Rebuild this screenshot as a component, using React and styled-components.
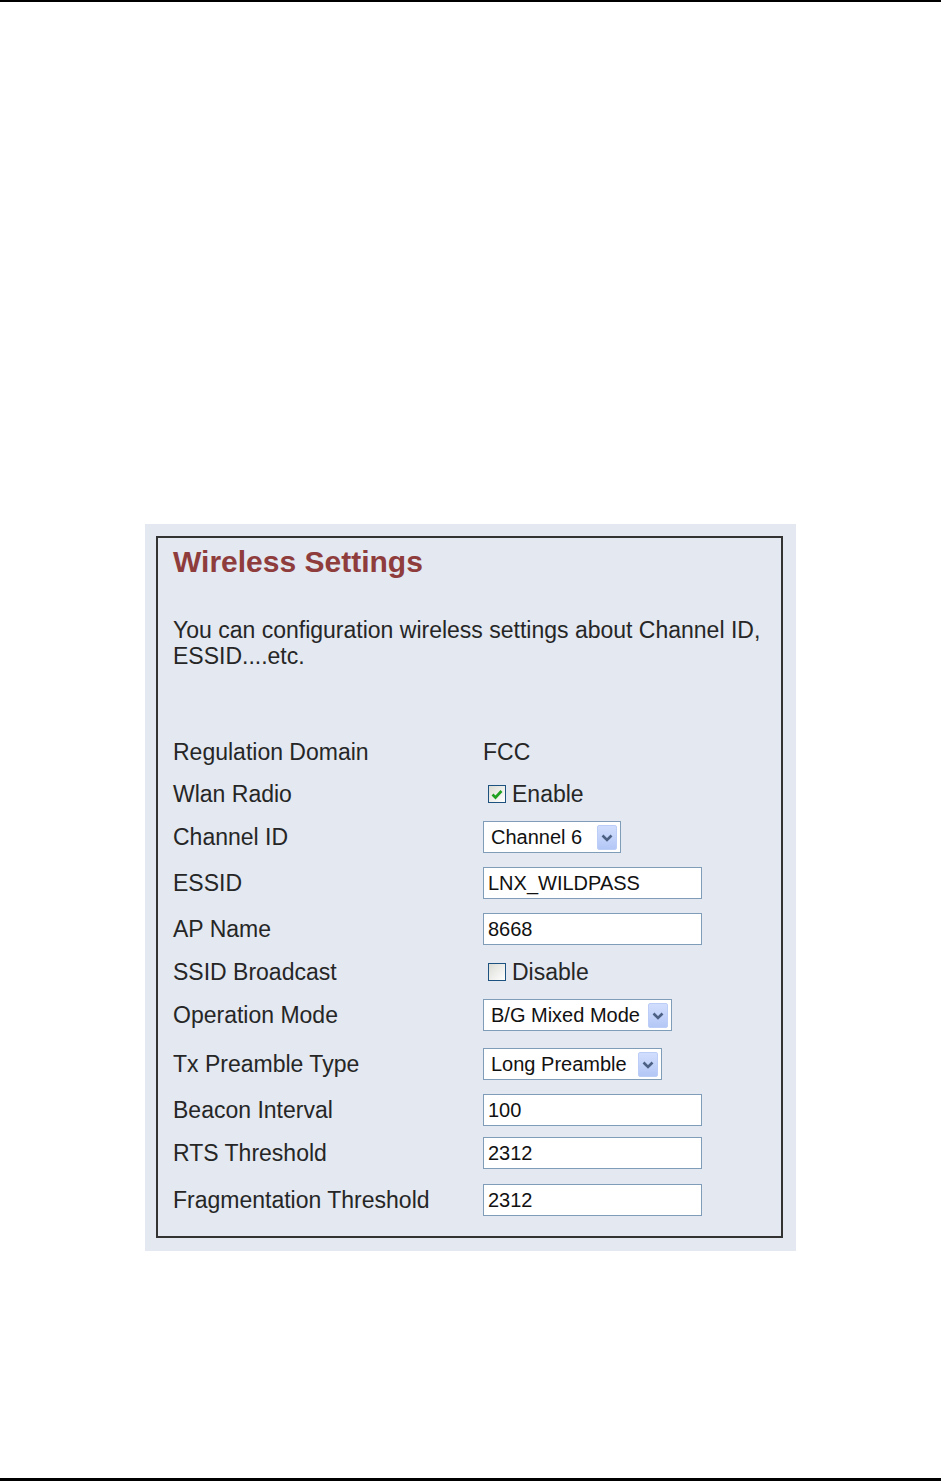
import React from "react";
import styled, { createGlobalStyle } from "styled-components";

const Global = createGlobalStyle`
  html, body { margin: 0; padding: 0; background: #ffffff; }
  body { font-family: "Liberation Sans", Arial, sans-serif; }
`;

const Page = styled.div`
  width: 941px;
  height: 1481px;
  display: flex;
  flex-direction: column;
  box-sizing: border-box;
  border-top: 2px solid #000;
  border-bottom: 3px solid #000;
`;

const Panel = styled.section`
  margin: 522px 0 0 145px;
  width: 651px;
  height: 727px;
  box-sizing: border-box;
  background: #e3e8f1;
  padding: 12px 13px 13px 11px;
`;

const Frame = styled.div`
  height: 100%;
  box-sizing: border-box;
  border: 2px solid #333333;
  padding: 7px 10px 0 15px;
  display: flex;
  flex-direction: column;
`;

const Title = styled.h1`
  margin: 0;
  font-size: 30px;
  line-height: 34px;
  font-weight: bold;
  color: #8f3c3c;
`;

const Intro = styled.p`
  margin: 38px 0 0 0;
  font-size: 23px;
  line-height: 26px;
  color: #262626;
`;

const Rows = styled.div`
  margin-top: 62px;
  display: flex;
  flex-direction: column;
`;

const Row = styled.div`
  display: grid;
  grid-template-columns: 310px 1fr;
  align-items: center;
  height: ${(p) => p.$h}px;
  font-size: 23px;
  line-height: 26px;
  color: #262626;
`;

const Label = styled.div``;

const Value = styled.div`
  display: flex;
  align-items: center;
`;

const TextBox = styled.div`
  width: 219px;
  height: 32px;
  box-sizing: border-box;
  border: 1px solid #7f9db9;
  background: #fff;
  padding-left: 4px;
  display: flex;
  align-items: center;
  font-size: 20px;
  color: #111;
`;

const Select = styled.div`
  width: ${(p) => p.$w}px;
  height: 32px;
  box-sizing: border-box;
  border: 1px solid #7f9db9;
  background: #fff;
  padding: 0 3px 0 7px;
  display: flex;
  align-items: center;
  justify-content: space-between;
  font-size: 20px;
  color: #111;
`;

const ArrowBtn = styled.span`
  width: 20px;
  height: 25px;
  box-sizing: border-box;
  margin-top: 1px;
  border: 1px solid #bccef7;
  border-radius: 2px;
  background: linear-gradient(#d2defd, #b3c7f6);
  display: flex;
  align-items: center;
  justify-content: center;
`;

const Check = styled.span`
  width: 18px;
  height: 18px;
  box-sizing: border-box;
  margin: 0 6px 0 5px;
  border: 1px solid #1c5180;
  background: linear-gradient(135deg, #dcdcd6, #ffffff);
  display: flex;
  align-items: center;
  justify-content: center;
`;

const Chevron = () => (
  <svg width="12" height="8" viewBox="0 0 12 8">
    <path d="M1.5 1.5 L6 6 L10.5 1.5" fill="none" stroke="#4d6185" strokeWidth="2.6" />
  </svg>
);

const Tick = () => (
  <svg width="12" height="11" viewBox="0 0 12 11">
    <path d="M1.5 5.5 L4.5 8.5 L10.5 2" fill="none" stroke="#21a121" strokeWidth="2.6" />
  </svg>
);

const rows = [
  { label: "Regulation Domain", h: 42, kind: "text", value: "FCC" },
  { label: "Wlan Radio", h: 42, kind: "check", checked: true, value: "Enable" },
  { label: "Channel ID", h: 44, kind: "select", w: 138, value: "Channel 6" },
  { label: "ESSID", h: 47, kind: "input", value: "LNX_WILDPASS" },
  { label: "AP Name", h: 46, kind: "input", value: "8668" },
  { label: "SSID Broadcast", h: 40, kind: "check", checked: false, value: "Disable" },
  { label: "Operation Mode", h: 46, kind: "select", w: 189, value: "B/G Mixed Mode" },
  { label: "Tx Preamble Type", h: 52, kind: "select", w: 179, value: "Long Preamble" },
  { label: "Beacon Interval", h: 40, kind: "input", value: "100" },
  { label: "RTS Threshold", h: 46, kind: "input", value: "2312" },
  { label: "Fragmentation Threshold", h: 47, kind: "input", value: "2312" },
];

function renderValue(r) {
  if (r.kind === "input") return <TextBox>{r.value}</TextBox>;
  if (r.kind === "select")
    return (
      <Select $w={r.w}>
        <span>{r.value}</span>
        <ArrowBtn>
          <Chevron />
        </ArrowBtn>
      </Select>
    );
  if (r.kind === "check")
    return (
      <>
        <Check>{r.checked ? <Tick /> : null}</Check>
        <span>{r.value}</span>
      </>
    );
  return <span>{r.value}</span>;
}

export default function App() {
  return (
    <>
      <Global />
      <Page>
        <Panel>
          <Frame>
            <Title>Wireless Settings</Title>
            <Intro>You can configuration wireless settings about Channel ID, ESSID....etc.</Intro>
            <Rows>
              {rows.map((r) => (
                <Row key={r.label} $h={r.h}>
                  <Label>{r.label}</Label>
                  <Value>{renderValue(r)}</Value>
                </Row>
              ))}
            </Rows>
          </Frame>
        </Panel>
      </Page>
    </>
  );
}
